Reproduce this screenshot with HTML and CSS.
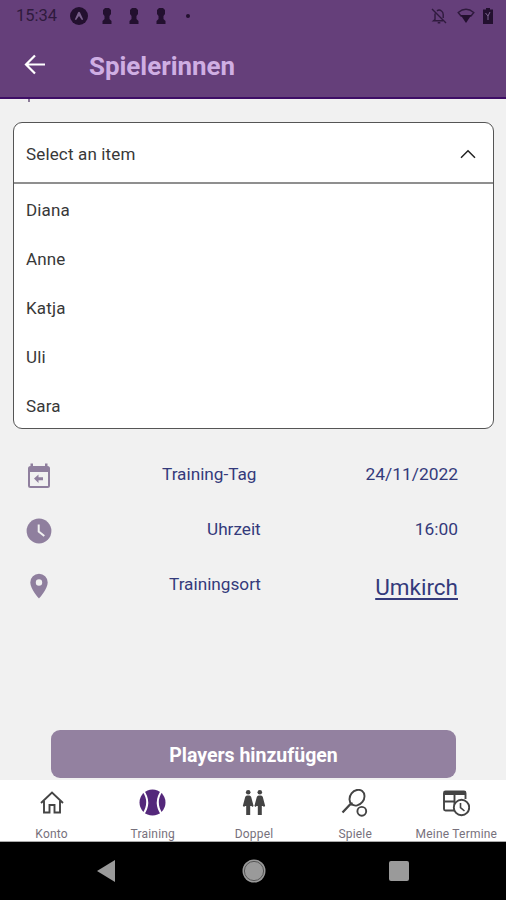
FILE: index.html
```html
<!DOCTYPE html>
<html lang="de">
<head>
<meta charset="utf-8">
<title>Spielerinnen</title>
<link rel="stylesheet" href="styles.css">
</head>
<body>
<div class="phone">
  <header class="header">
    <div class="status">
      <span class="time">15:34</span>
      <svg class="s-app" width="18" height="18" viewBox="0 0 18 18"><circle cx="9" cy="9" r="9" fill="#23102f"/><path d="M4.8 12.6 8 5.4Q9 4 10 5.4l3.2 7.2-1.3.4L9 9l-2.900 4z" fill="#79608b"/></svg>
      <svg class="s-key" width="10" height="16" viewBox="0 0 10 16"><path d="M3 0h4l2 2v4L7.500 8v3L9.500 13v3H.5v-3l2-2V8L1 6V2z"/></svg>
      <svg class="s-key" width="10" height="16" viewBox="0 0 10 16"><path d="M3 0h4l2 2v4L7.500 8v3L9.500 13v3H.5v-3l2-2V8L1 6V2z"/></svg>
      <svg class="s-key" width="10" height="16" viewBox="0 0 10 16"><path d="M3 0h4l2 2v4L7.500 8v3L9.500 13v3H.5v-3l2-2V8L1 6V2z"/></svg>
      <i class="dot"></i>
      <svg class="s-bell" width="16" height="16" viewBox="0 0 16 16" fill="none" stroke="#2f1a3d" stroke-width="1.400"><path d="M1 1l14 14M4 5.500v6L2.500 12.800H12M6 3Q8 1 10.500 3q1.700 1.200 1.700 3.500V10M6.700 14.700h2.600"/></svg>
      <svg class="s-wifi" width="18" height="16" viewBox="0 0 18 16"><path d="M1.200 4.500Q9-2 16.800 4.500L14 8H4z" fill="none" stroke="#2f1a3d" stroke-width="1.400"/><path d="M3.600 7H14.400L9 15z" fill="#23102f"/></svg>
      <svg class="s-bat" width="10" height="16" viewBox="0 0 10 16"><path d="M3 0h4v1.500h3V16H0V1.500h3z" fill="#23102f"/><path d="M2.500 5l2.500 3 2-4M5 8v4" fill="none" stroke="#7d6690" stroke-width="1"/></svg>
    </div>
    <div class="appbar">
      <svg class="back" width="22" height="22" viewBox="0 0 22 22" fill="none" stroke="#fff" stroke-width="2.200"><path d="M21 11.500H2.500M11 2.500 2 11.500l9 9"/></svg>
      <h1>Spielerinnen</h1>
    </div>
  </header>
  <main class="content">
    <div class="clip"><i></i></div>
    <section class="select">
      <div class="select-head"><span>Select an item</span>
        <svg width="16" height="10" viewBox="0 0 16 10" fill="none" stroke="#222" stroke-width="1.500"><path d="M1 8.700 8 1.700l7 7"/></svg>
      </div>
      <ul>
        <li>Diana</li><li>Anne</li><li>Katja</li><li>Uli</li><li>Sara</li>
      </ul>
    </section>
    <section class="details">
      <div class="row">
        <svg class="ico" width="26" height="26" viewBox="0 0 26 26"><path fill="#8f7f9e" fill-rule="evenodd" d="M4.500.5H7V3h12V.500h2.500V3Q24 3 24 5.500v17q0 2.500-2.500 2.500h-17Q2 25 2 22.500v-17Q2 3 4.500 3zM4 9v14h18V9zM8 15.500l4.500-4v2.700H17v3h-4.500V20z"/></svg>
        <span class="label tag">Training-Tag</span><span class="value date">24/11/2022</span>
      </div>
      <div class="row">
        <svg class="ico" width="26" height="26" viewBox="0 0 26 26"><circle cx="13" cy="13" r="12.400" fill="#8f7f9e"/><path d="M12.700 6.500v7l5.600 4.600" fill="none" stroke="#f1f1f1" stroke-width="2"/></svg>
        <span class="label zeit">Uhrzeit</span><span class="value">16:00</span>
      </div>
      <div class="row">
        <svg class="ico" width="26" height="26" viewBox="0 0 26 26"><path fill="#8f7f9e" fill-rule="evenodd" d="M13 .8a8.700 8.700 0 0 1 8.700 8.700C21.700 16 13 25.500 13 25.500S4.300 16 4.300 9.500A8.700 8.700 0 0 1 13 .8zM13 6.300a3.200 3.200 0 1 0 0 6.400 3.200 3.200 0 0 0 0-6.400z"/></svg>
        <span class="label ort">Trainingsort</span><a class="value link">Umkirch</a>
      </div>
    </section>
    <button class="add">Players hinzufügen</button>
  </main>
  <nav class="tabs">
    <div class="tab">
      <svg width="28" height="28" viewBox="0 0 28 28" fill="none" stroke="#444" stroke-width="1.900"><path d="M3 14 14 3.500 25 14M6 12v11.500h5.500V16h5v7.500H22V12"/></svg>
      <span>Konto</span>
    </div>
    <div class="tab active">
      <svg width="28" height="28" viewBox="0 0 28 28"><circle cx="13.500" cy="13.500" r="13" fill="#54287b"/><path d="M4 1.500Q12.500 13.500 4 25.500M23 1.500Q14.500 13.500 23 25.500" fill="none" stroke="#fff" stroke-width="2"/></svg>
      <span>Training</span>
    </div>
    <div class="tab">
      <svg width="28" height="28" viewBox="0 0 28 28" fill="#444"><circle cx="8.200" cy="3.200" r="2.300"/><path d="M7 6.500h2.400q1.300 0 1.800 1.500l2.400 9-1.500.9-.5-.9h-1.400v9H6.200v-9H4.800l-.5.9L2.800 17l2.400-9Q5.700 6.500 7 6.500z"/><circle cx="19.800" cy="3.200" r="2.300"/><path d="M18.600 6.500H21q1.300 0 1.800 1.500l2.400 9-1.500.9-.5-.9h-1.400v9h-4v-9h-1.400l-.5.9-1.500-.9 2.400-9q.5-1.500 1.800-1.500z"/></svg>
      <span>Doppel</span>
    </div>
    <div class="tab">
      <svg width="28" height="28" viewBox="0 0 28 28" fill="none" stroke="#444" stroke-width="1.900"><ellipse cx="16" cy="8.700" rx="6.900" ry="8.400" transform="rotate(38 16 8.700)"/><path d="M10.500 13.500V16.500M9.500 15 1.500 23.500" stroke-width="2.300"/><circle cx="20.800" cy="22.300" r="4.400"/></svg>
      <span>Spiele</span>
    </div>
    <div class="tab">
      <svg width="28" height="28" viewBox="0 0 28 28" fill="none" stroke="#444" stroke-width="1.900"><path d="M12.500 21.500H3.500Q2 21.500 2 20V4q0-1.500 1.500-1.500H22Q23.500 2.500 23.500 4v6M2 12.500h11M12.500 5v16M2 5h21.500"/><path d="M2 4.200h21.500" stroke-width="2.600"/><circle cx="19.500" cy="18.500" r="7.700" fill="#fff"/><path d="M18.500 14v4.700l4 3.300" stroke-width="1.600"/></svg>
      <span>Meine Termine</span>
    </div>
  </nav>
  <footer class="system">
    <svg width="18" height="22" viewBox="0 0 18 22"><path d="M0 11 18 0v22z" fill="#9a9a9a"/></svg>
    <svg class="home" width="24" height="24" viewBox="0 0 24 24"><circle cx="12" cy="12" r="11.500" fill="#9a9a9a"/><circle cx="12" cy="12" r="9.600" fill="none" stroke="#555" stroke-width="1"/></svg>
    <i class="recent"></i>
  </footer>
</div>
</body>
</html>
```
FILE: styles.css
```css
* { box-sizing: border-box; }
body { margin: 0; font-family: Roboto, "Liberation Sans", sans-serif; }
.phone { width: 506px; height: 900px; display: flex; flex-direction: column; background: #f1f1f1; overflow: hidden; }
.header { height: 99px; flex: none; background: #653f7a; border-bottom: 2px solid #3e0d66; }
.status { height: 31px; display: flex; align-items: center; padding: 0 13px 0 16px; }
.time { width: 54px; font-size: 16.500px; line-height: 20px; color: #2f1a3d; }
.s-app { margin-right: 14px; }
.s-key { fill: #23102f; margin-right: 17px; }
.dot { width: 4px; height: 4px; border-radius: 50%; background: #23102f; margin-left: 3px; }
.s-bell { margin-left: auto; margin-right: 10px; }
.s-wifi { margin-right: 8px; }
.appbar { display: flex; align-items: center; height: 66px; padding-left: 24px; }
.back { margin-right: 43px; }
h1 { margin: 3px 0 0; font-size: 25.900px; line-height: 30px; font-weight: 700; color: #cfaee3; }
.content { flex: none; height: 681px; padding: 0 12px 0 13px; }
.clip { height: 23px; padding-left: 15px; }
.clip i { display: block; width: 2px; height: 3px; background: #8b7b98; }
.select { height: 307px; background: #fff; border: 1.500px solid #555; border-radius: 9px; color: #383838; font-size: 17px; letter-spacing: .15px; }
.select-head { height: 61px; border-bottom: 2px solid #8f8f8f; display: flex; align-items: center; justify-content: space-between; padding: 2px 17px 0 12px; }
ul { list-style: none; margin: 0; padding: 0; }
li { height: 49px; line-height: 52px; padding-left: 12px; }
.details { padding: 18px 36px 0 13px; }
.row { display: flex; height: 55px; align-items: center; color: #343a7b; font-size: 17.200px; }
.ico { flex: none; margin-top: 2px; margin-right: 1px; }
.label { margin-left: 109px; }
.zeit { margin-left: 154px; }
.ort { margin-left: 116px; }
.value { margin-left: auto; font-size: 17.400px; }
.label, .value { line-height: 24px; margin-top: -1px; }
.link { font-size: 22.500px; text-decoration: underline; text-decoration-thickness: 1.500px; text-underline-offset: 3px; margin-top: 5px; }
.add { display: block; width: 405px; height: 48px; margin: 118px 0 0 38px; padding: 2px 0 0; border: 0; border-radius: 9px; background: #9381a0; color: #fff; font: 700 19.500px Roboto, sans-serif; }
.tabs { height: 62px; flex: none; background: #fff; display: grid; grid-template-columns: repeat(5, 1fr); border-bottom: 1px solid #aaa; padding-left: 1px; margin-right: -1px; }
.tab { display: flex; flex-direction: column; align-items: center; color: #77717c; font-size: 12px; line-height: 14px; padding-top: 9px; gap: 10px; letter-spacing: .2px; white-space: nowrap; }
.system { flex: 1; background: #000; display: flex; align-items: center; padding-left: 97px; }
.home { margin-left: 127px; }
.recent { width: 20px; height: 20px; border-radius: 2px; background: #9a9a9a; margin-left: 123px; }
```
